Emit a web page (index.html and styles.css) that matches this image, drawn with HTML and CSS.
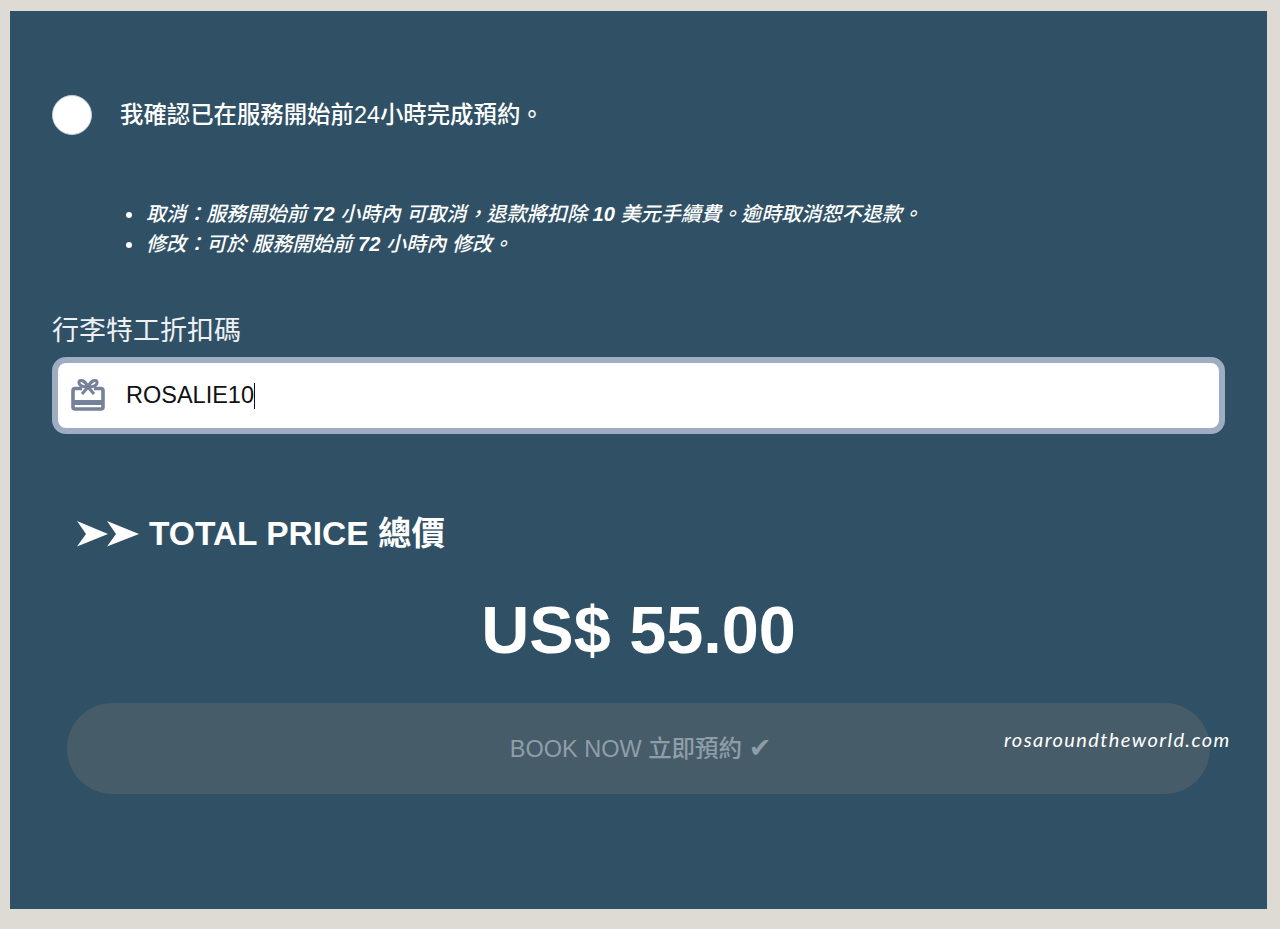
FILE: index.html
```html
<!DOCTYPE html>
<html lang="zh-Hant">
<head>
<meta charset="utf-8">
<title>Booking</title>
<link rel="stylesheet" href="styles.css">
</head>
<body>
<main class="panel">
  <label class="confirm">
    <span class="radio"></span>
    <span class="confirm-text">我確認已在服務開始前24小時完成預約。</span>
  </label>
  <ul class="policy">
    <li>取消：服務開始前 <b>72</b> 小時內 可取消，退款將扣除 <b>10</b> 美元手續費。逾時取消恕不退款。</li>
    <li>修改：可於 服務開始前 <b>72</b> 小時內 修改。</li>
  </ul>
  <div class="field-label">行李特工折扣碼</div>
  <div class="input">
    <svg class="gift" viewBox="0 0 34 32" width="34" height="32" aria-hidden="true">
      <path d="M11 9.500 H4 Q2 9.500 2 11.500 V28 Q2 30 4 30 H30 Q32 30 32 28 V11.500 Q32 9.500 30 9.500 H23" fill="none" stroke="#76829a" stroke-width="3.600"/>
      <rect x="2" y="21" width="30" height="5" fill="#76829a"/>
      <path d="M17 8 C14 1 8.500 0 8 3 C7.500 6.500 12 8 17 8 C22 8 26.500 6.500 26 3 C25.500 0 20 1 17 8 Z" fill="none" stroke="#76829a" stroke-width="3"/>
      <path d="M17 8 L11 15 M17 8 L23 15" fill="none" stroke="#76829a" stroke-width="3"/>
    </svg>
    <span class="code">ROSALIE10</span><span class="caret"></span>
  </div>
  <h2 class="total">
    <svg class="arrows" viewBox="0 0 62 26" width="62" height="26" aria-hidden="true">
      <path d="M0 0 L31 13 L0 25.500 L9 13 Z M30 0 L62 13 L30 25.500 L39 13 Z" fill="#fff"/>
    </svg>
    <span>TOTAL PRICE 總價</span>
  </h2>
  <div class="price">US$ 55.00</div>
  <button class="book" type="button">BOOK NOW <span class="cjk">立即預約</span> <span class="check">✔</span></button>
  <div class="mark">rosaroundtheworld.com</div>
</main>
</body>
</html>
```

FILE: styles.css
```css
html, body { margin: 0; padding: 0; }
body {
  width: 1280px;
  height: 929px;
  overflow: hidden;
  background: #dedbd5;
  padding: 11px 13px 20px 10px;
  box-sizing: border-box;
  font-family: "Liberation Sans", "Noto Sans CJK TC", sans-serif;
}
.panel {
  position: relative;
  height: 898px;
  box-sizing: border-box;
  background: #305165;
  color: #fff;
  padding: 84px 42px 0;
}
.confirm { display: flex; align-items: center; gap: 28px; height: 40px; }
.radio {
  width: 38px;
  height: 38px;
  border-radius: 50%;
  background: #fff;
  border: 1px solid #c9ced3;
}
.confirm-text { font-size: 23.400px; font-weight: 500; margin-top: -5px; }
.policy {
  margin: 64px 0 0;
  padding: 0 0 0 94px;
  font-size: 20.100px;
  font-weight: 500;
  font-style: italic;
  line-height: 30px;
  list-style: none;
}
.policy b { font-weight: 700; }
.policy li { position: relative; }
.policy li::before {
  content: "";
  position: absolute;
  left: -20px;
  top: 13px;
  width: 6px;
  height: 6px;
  border-radius: 50%;
  background: #fff;
}
.field-label { margin-top: 56px; font-size: 27px; line-height: 32px; color: #eef1f3; }
.input {
  margin-top: 10px;
  height: 77px;
  box-sizing: border-box;
  border: 6px solid #9eadc1;
  border-radius: 14px;
  background: #fff;
  display: flex;
  align-items: center;
  padding-left: 13px;
  color: #111;
}
.gift { flex: none; margin-right: 21px; margin-top: -2px; }
.code { font-size: 23.500px; }
.caret { width: 1px; height: 26px; background: #111; }
.total {
  margin: 80px 0 0 25px;
  display: flex;
  align-items: center;
  gap: 10px;
  font-size: 33.500px;
  line-height: 40px;
  font-weight: 700;
}
.arrows { flex: none; }
.price {
  margin-top: 38px;
  text-align: center;
  font-size: 66.600px;
  font-weight: 700;
  line-height: 76px;
}
.book {
  display: block;
  margin: 35px 15px 0;
  width: 1143px;
  height: 91px;
  border: 0;
  border-radius: 46px;
  background: #475c69;
  color: #8e9ea9;
  font: 23.500px/30px "Liberation Sans", "Noto Sans CJK TC", sans-serif;
  padding: 0 0 0 4px;
}
.cjk { font-weight: 500; }
.check { font-family: "DejaVu Sans", sans-serif; font-size: 27px; line-height: 24px; }
.mark {
  position: absolute;
  left: 994px;
  top: 716px;
  font-family: "Lato", sans-serif;
  font-style: italic;
  font-size: 20px;
  letter-spacing: 1.400px;
  color: #fff;
  white-space: nowrap;
}
```
